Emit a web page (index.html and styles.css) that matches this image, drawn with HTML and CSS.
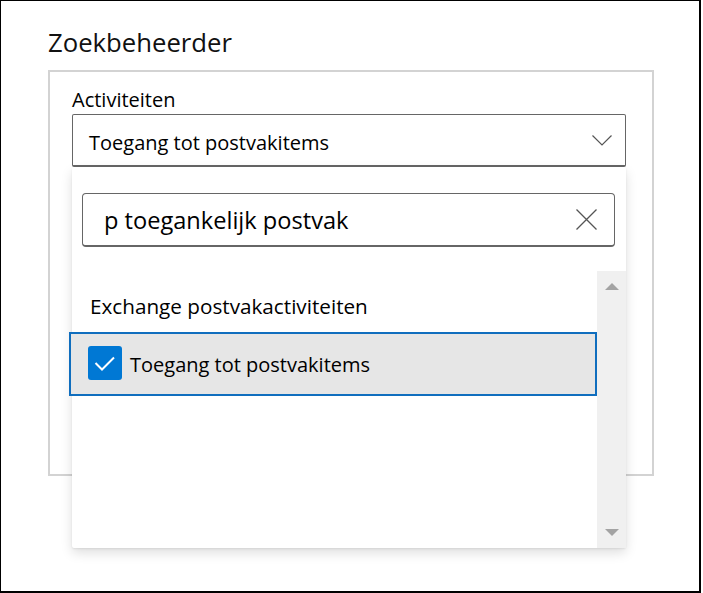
FILE: index.html
```html
<!DOCTYPE html>
<html lang="nl">
<head>
<meta charset="utf-8">
<title>Zoekbeheerder</title>
<link rel="stylesheet" href="styles.css">
</head>
<body>
<div class="frame">
  <h1 class="title">Zoekbeheerder</h1>
  <div class="panel">
    <div class="label">Activiteiten</div>
    <div class="combo">
      <div class="combo-box">
        <span class="combo-text">Toegang tot postvakitems</span>
        <svg class="chevron" width="20" height="11" viewBox="0 0 20 11"><path d="M0.5 0.5 L10 10 L19.5 0.5" fill="none" stroke="#555" stroke-width="1.2"/></svg>
      </div>
      <div class="popup">
        <div class="search">
          <span class="search-text">p toegankelijk postvak</span>
          <svg class="clear" width="21" height="21" viewBox="0 0 21 21"><path d="M0.5 0.5 L20.5 20.5 M20.5 0.5 L0.5 20.5" fill="none" stroke="#555" stroke-width="1.3"/></svg>
        </div>
        <div class="list-area">
          <div class="list">
            <div class="group">Exchange postvakactiviteiten</div>
            <div class="item">
              <span class="check">
                <svg width="34" height="34" viewBox="0 0 34 34"><path d="M7.5 17 L14 23.5 L26 11.5" fill="none" stroke="#fff" stroke-width="2"/></svg>
              </span>
              <span class="item-text">Toegang tot postvakitems</span>
            </div>
          </div>
          <div class="scrollbar">
            <span class="arrow up"></span>
            <span class="arrow down"></span>
          </div>
        </div>
      </div>
    </div>
  </div>
</div>
</body>
</html>
```

FILE: styles.css
```css
* { box-sizing: border-box; }
html, body { margin: 0; padding: 0; background: #fff; }
body {
  font-family: "Open Sans", "Noto Sans", sans-serif;
  color: #000;
}
.frame {
  width: 701px;
  height: 593px;
  border-style: solid;
  border-color: #000;
  border-width: 1px 2px 2px 1px;
  padding: 24px 0 0 47px;
}
.title {
  margin: 0;
  font-weight: 400;
  font-size: 25.7px;
  line-height: 36px;
  color: #111;
}
.panel {
  margin-top: 9px;
  width: 606px;
  height: 406px;
  border: 2px solid #d3d3d3;
  padding: 14px 0 0 22px;
}
.label {
  font-size: 20px;
  line-height: 26px;
  height: 26px;
  padding-top: 1px;
}
.combo {
  position: relative;
  margin-top: 2px;
  width: 554px;
}
.combo-box {
  height: 53px;
  border: 1px solid #666;
  border-bottom-width: 2px;
  border-radius: 2px;
  display: flex;
  align-items: center;
  padding: 5px 13px 0 16px;
}
.combo-text {
  flex: 1;
  font-size: 20px;
}
.chevron { margin-top: -5px; }
.popup {
  position: absolute;
  top: 100%;
  left: 0;
  width: 554px;
  height: 381px;
  background: #fff;
  border-radius: 2px;
  box-shadow: 0 5px 12px rgba(0, 0, 0, 0.13), 0 1px 2px rgba(0, 0, 0, 0.08);
  display: flex;
  flex-direction: column;
}
.search {
  margin: 26px 11px 0 10px;
  height: 54px;
  border: 1px solid #666;
  border-bottom-width: 2px;
  border-radius: 4px;
  display: flex;
  align-items: center;
  padding: 0 17px 0 21px;
}
.search-text {
  flex: 1;
  font-size: 23.6px;
}
.list-area {
  margin-top: 24px;
  flex: 1;
  display: flex;
}
.list {
  flex: 1;
}
.group {
  padding: 22px 0 0 18px;
  font-size: 20.7px;
  line-height: 26px;
}
.item {
  margin: 13px 0 0 -3px;
  height: 64px;
  border: 2px solid #106ebe;
  background: #e6e6e6;
  display: flex;
  align-items: center;
  padding-left: 17px;
  gap: 8px;
}
.check {
  width: 34px;
  height: 34px;
  border-radius: 3px;
  background: #0078d4;
  margin-top: -3px;
}
.check svg { display: block; }
.item-text {
  font-size: 20px;
  margin-top: 1px;
}
.scrollbar {
  width: 29px;
  background: #f0f0f0;
  display: flex;
  flex-direction: column;
  justify-content: space-between;
  align-items: center;
  padding: 12px 0 12px;
}
.arrow {
  width: 0;
  height: 0;
  border-left: 7px solid transparent;
  border-right: 7px solid transparent;
}
.arrow.up { border-bottom: 7px solid #a3a3a3; }
.arrow.down { border-top: 7px solid #a3a3a3; }
```
